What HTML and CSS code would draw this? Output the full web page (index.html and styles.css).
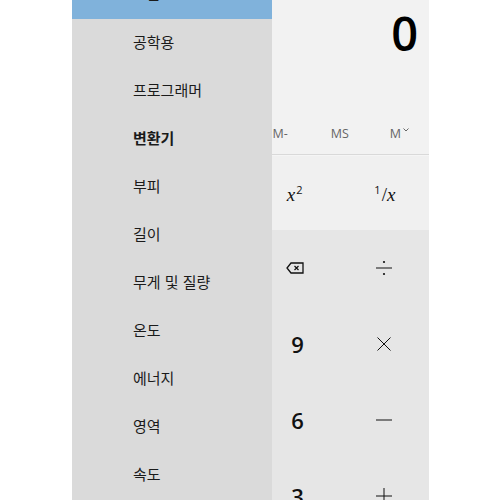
FILE: index.html
```html
<!DOCTYPE html>
<html lang="ko">
<head>
  <meta charset="UTF-8">
  <title>계산기</title>
  <link rel="stylesheet" href="styles.css">
</head>
<body>
  <div class="window">
    <div class="calc">
      <div class="display">0</div>
      <div class="memory">
        <span></span><span></span><span></span><span>M-</span><span>MS</span>
        <span>M<svg class="chev" width="6" height="4" viewBox="0 0 6 4"><path d="M0.5 0.5 L3 3 L5.5 0.5" fill="none" stroke="#666" stroke-width="1"/></svg></span>
      </div>
      <div class="keys sci">
        <div class="key"></div>
        <div class="key"></div>
        <div class="key math"><span><i>x</i><sup>2</sup></span></div>
        <div class="key math"><span><sup>1</sup>/<i>x</i></span></div>
      </div>
      <div class="keys pad">
        <div class="key"></div>
        <div class="key"></div>
        <div class="key op">
          <svg width="18" height="12" viewBox="0 0 18 12"><path d="M5 1 H17 V11 H5 L1 6 Z" fill="none" stroke="#111" stroke-width="1.3"/><path d="M8.5 4 L12.5 8 M12.5 4 L8.5 8" stroke="#111" stroke-width="1.2"/></svg>
        </div>
        <div class="key op">
          <svg width="18" height="16" viewBox="0 0 18 16"><path d="M1 8 H17" stroke="#111" stroke-width="1"/><circle cx="9" cy="2" r="1.1" fill="#111"/><circle cx="9" cy="14" r="1.1" fill="#111"/></svg>
        </div>
        <div class="key"></div>
        <div class="key"></div>
        <div class="key num">9</div>
        <div class="key op">
          <svg width="16" height="16" viewBox="0 0 16 16"><path d="M1.5 1.5 L14.5 14.5 M14.5 1.5 L1.5 14.5" stroke="#111" stroke-width="1"/></svg>
        </div>
        <div class="key"></div>
        <div class="key"></div>
        <div class="key num">6</div>
        <div class="key op">
          <svg width="18" height="4" viewBox="0 0 18 4"><path d="M1 2 H17" stroke="#111" stroke-width="1"/></svg>
        </div>
        <div class="key"></div>
        <div class="key"></div>
        <div class="key num">3</div>
        <div class="key op">
          <svg width="18" height="18" viewBox="0 0 18 18"><path d="M1 9 H17 M9 1 V17" stroke="#111" stroke-width="1"/></svg>
        </div>
      </div>
    </div>

    <nav class="nav">
      <ul class="nav-list">
        <li class="active">표준</li>
        <li>공학용</li>
        <li>프로그래머</li>
        <li class="heading">변환기</li>
        <li>부피</li>
        <li>길이</li>
        <li>무게 및 질량</li>
        <li>온도</li>
        <li>에너지</li>
        <li>영역</li>
        <li>속도</li>
      </ul>
    </nav>
  </div>
</body>
</html>
```

FILE: styles.css
```css
* {
  margin: 0;
  padding: 0;
  box-sizing: border-box;
}

body {
  background: #ffffff;
  font-family: "Open Sans", "Noto Sans", sans-serif;
  color: #111;
}

.window {
  position: relative;
  margin-left: 72px;
  width: 357px;
  height: 500px;
  overflow: hidden;
  background: #f2f2f2;
}

.calc {
  display: flex;
  flex-direction: column;
}

.display {
  height: 112px;
  padding: 10px 11px 0 0;
  text-align: right;
  font-size: 47px;
  font-weight: 600;
  line-height: 1;
  color: #000;
}

.memory {
  height: 43px;
  display: grid;
  grid-template-columns: repeat(6, 1fr);
  align-items: center;
  border-bottom: 1px solid #d9d9d9;
  font-size: 12.5px;
  color: #666;
}

.memory span {
  display: flex;
  justify-content: center;
  align-items: center;
}

.chev {
  margin-left: 2px;
  margin-bottom: 6px;
}

.keys {
  display: grid;
  grid-template-columns: repeat(4, 1fr);
}

.sci {
  height: 75px;
  background: #f0f0f0;
  border-top: 1px solid #f5f5f5;
}

.pad {
  grid-auto-rows: 76px;
  background: #e6e6e6;
}

.key {
  display: flex;
  justify-content: center;
  align-items: center;
  font-size: 17px;
}

.num {
  font-size: 22px;
  font-weight: 600;
  padding-left: 5px;
}

.math {
  font-family: "Liberation Serif", serif;
  font-size: 19px;
  line-height: 1;
  padding-top: 2px;
}

.math sup {
  font-family: "Open Sans", sans-serif;
  font-size: 11px;
  line-height: 1;
  vertical-align: 7px;
  margin: 0 1px;
}

.nav {
  position: absolute;
  top: 0;
  left: 0;
  width: 200px;
  height: 100%;
  background: #dadada;
}

.nav-list {
  list-style: none;
  margin-top: -29px;
  font-family: "Noto Sans CJK KR", sans-serif;
  font-size: 15px;
  color: #1a1a1a;
}

.nav-list li {
  height: 48px;
  display: flex;
  align-items: center;
  padding: 0 0 4px 61px;
}

.nav-list .active {
  background: #80b2db;
}

.nav-list .heading {
  font-weight: 700;
}
```
